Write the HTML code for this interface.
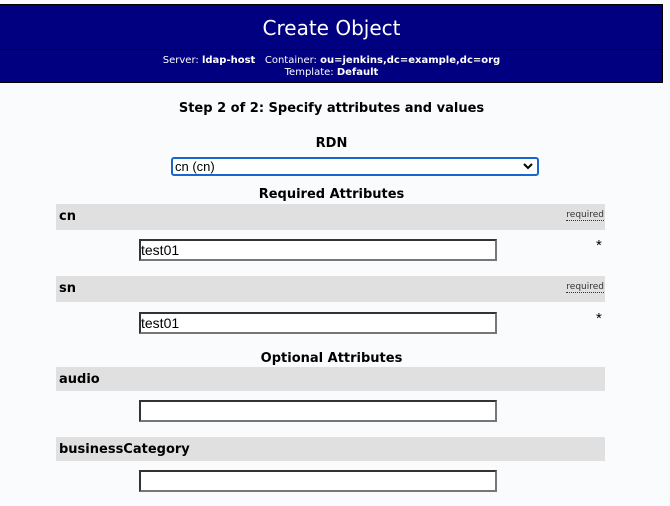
<!DOCTYPE html>
<html><head><meta charset="utf-8"><style>
body{margin:0;width:670px;height:506px;background:#fafbfd;font-family:"DejaVu Sans","Liberation Sans",sans-serif;overflow:hidden;position:relative;color:#000}
.a{position:absolute}
.hdr{left:0;top:4px;width:662px;height:77px;background:#000080;border:1px solid #000;border-left:none}
.sep{left:0;top:49px;width:663px;height:1px;background:#000}
.c{text-align:center}
.row{left:56px;width:549px;height:26px;background:#e0e0e0;font-weight:bold;font-size:13px}
.row span{position:absolute;left:3px;top:5px}
.req{position:absolute;right:1px;top:6px;font-size:9px;font-weight:normal;color:#333;border-bottom:1px dotted #333;line-height:10px}
.inp{left:139px;width:354px;height:18px;background:#fff;border:2px solid #333;border-right-color:#777;border-bottom-color:#777;font-family:"Liberation Sans",sans-serif;font-size:14px;line-height:19px;padding-left:0}
.st{left:596px;font-size:15px;font-family:"Liberation Sans",sans-serif}
</style></head><body>
<div class="a hdr"></div>
<div class="a sep"></div>
<div class="a c" style="left:0;width:663px;top:16px;color:#fff;font-size:20px">Create Object</div>
<div class="a c" style="left:0;width:663px;top:55px;color:#fff;font-size:10px;line-height:12px">Server: <b>ldap-host</b> &nbsp; Container: <b>ou=jenkins,dc=example,dc=org</b><br>Template: <b>Default</b></div>
<div class="a c" style="left:0;width:663px;top:101px;font-size:13px;font-weight:bold">Step 2 of 2: Specify attributes and values</div>
<div class="a c" style="left:0;width:663px;top:136px;font-size:13px;font-weight:bold">RDN</div>
<div class="a" style="left:171px;top:157px;width:362px;height:15px;border:2px solid #1a66d0;border-radius:3px;background:#fff;font-family:'Liberation Sans',sans-serif;font-size:13px;line-height:16px;padding-left:2px">cn (cn)<svg class="a" style="right:4px;top:4px" width="10" height="7" viewBox="0 0 10 7"><path d="M1 1l4 4 4-4" stroke="#000" stroke-width="2" fill="none"/></svg></div>
<div class="a c" style="left:0;width:663px;top:187px;font-size:13px;font-weight:bold">Required Attributes</div>
<div class="a row" style="top:204px"><span>cn</span><div class="req">required</div></div>
<div class="a inp" style="top:239px">test01</div>
<div class="a st" style="top:237px">*</div>
<div class="a row" style="top:276px"><span>sn</span><div class="req">required</div></div>
<div class="a inp" style="top:312px">test01</div>
<div class="a st" style="top:310px">*</div>
<div class="a c" style="left:0;width:663px;top:351px;font-size:13px;font-weight:bold">Optional Attributes</div>
<div class="a row" style="top:367px;height:24px"><span style="top:5px">audio</span></div>
<div class="a inp" style="top:400px"></div>
<div class="a row" style="top:437px;height:24px"><span style="top:5px">businessCategory</span></div>
<div class="a inp" style="top:470px"></div>
</body></html>
